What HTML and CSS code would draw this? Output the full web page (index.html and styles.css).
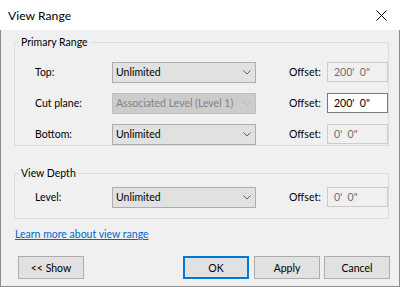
FILE: index.html
```html
<!DOCTYPE html>
<html>
<head>
<meta charset="utf-8">
<link rel="stylesheet" href="styles.css">
</head>
<body>
<div class="window">
  <div class="titlebar">
    <span class="title">View Range</span>
    <svg class="close" width="11" height="11" viewBox="0 0 11 11"><path d="M0.5 0.5 L10.5 10.5 M10.5 0.5 L0.5 10.5" stroke="#000" stroke-width="1" fill="none"/></svg>
  </div>
  <div class="client">
    <fieldset class="group primary">
      <legend>Primary Range</legend>
      <div class="rows">
        <div class="row">
          <span class="label">Top:</span>
          <div class="select"><span class="val">Unlimited</span><svg class="chev" width="8" height="5" viewBox="0 0 8 5"><path d="M0.5 0.5 L4 4 L7.5 0.5" stroke="#606060" fill="none"/></svg></div>
          <span class="olabel">Offset:</span>
          <div class="input disabled">200'  0"</div>
        </div>
        <div class="row">
          <span class="label">Cut plane:</span>
          <div class="select disabled"><span class="val">Associated Level (Level 1)</span><svg class="chev" width="8" height="5" viewBox="0 0 8 5"><path d="M0.5 0.5 L4 4 L7.5 0.5" stroke="#b8b8b8" fill="none"/></svg></div>
          <span class="olabel">Offset:</span>
          <div class="input active">200'  0"</div>
        </div>
        <div class="row">
          <span class="label">Bottom:</span>
          <div class="select"><span class="val">Unlimited</span><svg class="chev" width="8" height="5" viewBox="0 0 8 5"><path d="M0.5 0.5 L4 4 L7.5 0.5" stroke="#606060" fill="none"/></svg></div>
          <span class="olabel">Offset:</span>
          <div class="input disabled">0'  0"</div>
        </div>
      </div>
    </fieldset>
    <fieldset class="group depth">
      <legend>View Depth</legend>
      <div class="rows">
        <div class="row">
          <span class="label">Level:</span>
          <div class="select"><span class="val">Unlimited</span><svg class="chev" width="8" height="5" viewBox="0 0 8 5"><path d="M0.5 0.5 L4 4 L7.5 0.5" stroke="#606060" fill="none"/></svg></div>
          <span class="olabel">Offset:</span>
          <div class="input disabled">0'  0"</div>
        </div>
      </div>
    </fieldset>
    <a class="link" href="#">Learn more about view range</a>
    <div class="buttons">
      <div class="btn">&lt;&lt; Show</div>
      <div class="right">
        <div class="btn default">OK</div>
        <div class="btn">Apply</div>
        <div class="btn">Cancel</div>
      </div>
    </div>
  </div>
</div>
</body>
</html>
```
FILE: styles.css
```css
* { box-sizing: border-box; }
html, body { margin: 0; padding: 0; background: #fff; }
body { font-family: Lato, "Liberation Sans", sans-serif; font-size: 10.5px; color: #000; }
.window { width: 400px; height: 287px; display: flex; flex-direction: column; }
.titlebar {
  height: 30px; background: #fff; display: flex; align-items: center;
  justify-content: space-between; padding: 0 13px 0 8px;
}
.title { font-size: 12.2px; line-height: 20px; margin-top: 1px; }
.close { display: block; }
.client {
  flex: 1; background: #f0f0f0;
  border: 1px solid #8c8c8c; border-top: none;
  padding: 0 10px 0 13px;
  display: flex; flex-direction: column; align-items: flex-start;
}
.group {
  width: 375px; margin: 0; padding: 0;
  border: 1px solid #dcdcdc; min-width: 0;
}
.group legend {
  padding: 0 2px; margin-left: 4px; line-height: 14px; height: 14px;
}
.primary { margin-top: 5px; }
.primary .rows { padding: 13px 0 1px; }
.depth { margin-top: 20px; }
.depth .rows { padding: 7px 0 11px; }
.rows { display: flex; flex-direction: column; gap: 11px; }
.row { display: flex; align-items: center; height: 20px; padding-left: 20px; }
.label { width: 77px; }
.select {
  width: 144px; height: 21px; background: #e1e1e1; border: 1px solid #adadad;
  display: flex; align-items: center; justify-content: space-between;
  padding: 0 4px 0 3px; white-space: nowrap;
}
.select.disabled { background: #cccccc; border-color: #bfbfbf; color: #838383; }
.chev { display: block; }
.olabel { margin-left: 33px; width: 38px; }
.input {
  width: 61px; height: 20px; padding: 0 0 0 6px; line-height: 18px;
  white-space: pre; border: 1px solid #cccccc; background: #f0f0f0; color: #6d6d6d;
}
.input.active { background: #fff; border-color: #7a7a7a; color: #000; }
.link {
  margin: 7px 0 0 1px; line-height: 16px; color: #0066cc; text-decoration: underline;
}
.buttons {
  margin-top: 14px; width: 376px; display: flex; justify-content: space-between;
  padding-left: 4px;
}
.right { display: flex; gap: 4px; }
.btn {
  width: 66px; height: 23px; background: #e1e1e1; border: 1px solid #adadad;
  display: flex; align-items: center; justify-content: center;
}
.btn.default { border-color: #0078d7; box-shadow: inset 0 0 0 1px #0078d7; margin-right: 1px; }
```
